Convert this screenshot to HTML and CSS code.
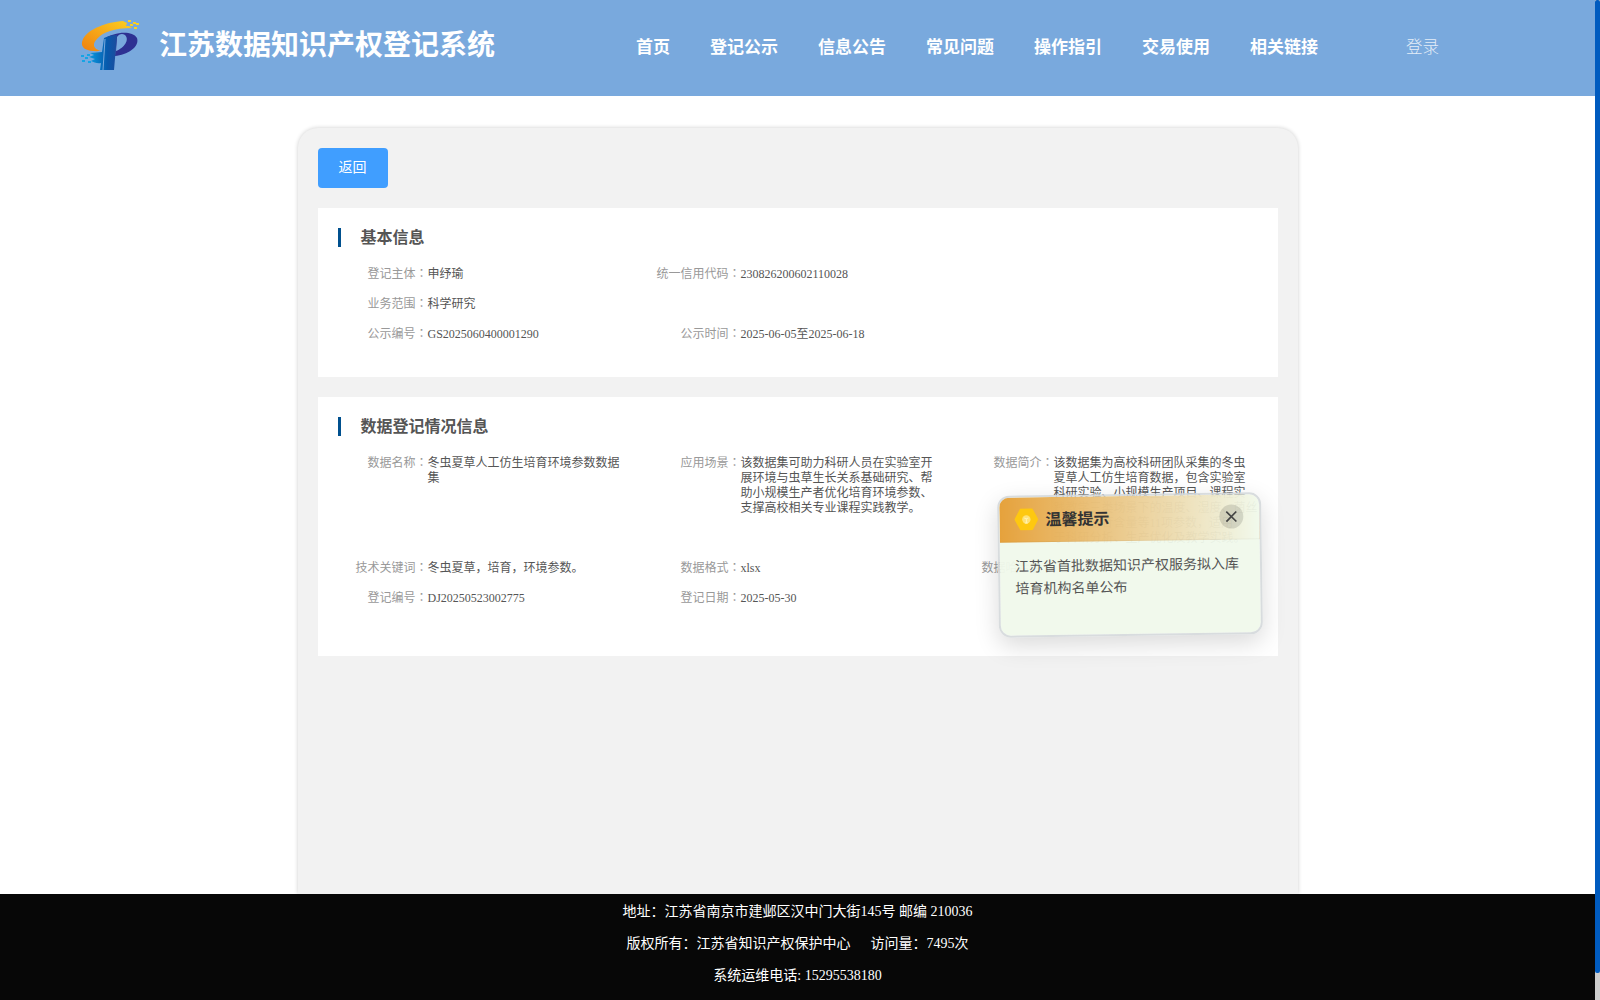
FILE: index.html
```html
<!DOCTYPE html>
<html lang="zh-CN">
<head>
<meta charset="utf-8">
<title>江苏数据知识产权登记系统</title>
<link rel="stylesheet" href="styles.css">
</head>
<body>
<div class="page">
  <header class="header">
    <svg class="logo" viewBox="0 0 60 52" width="60" height="52">
      <defs>
        <linearGradient id="gold" x1="0" y1="1" x2="1" y2="0"><stop offset="0" stop-color="#f08010"/><stop offset="1" stop-color="#fcd020"/></linearGradient>
        <linearGradient id="blue" x1="0" y1="0" x2="1" y2="0"><stop offset="0" stop-color="#0a9be0"/><stop offset=".65" stop-color="#0759ac"/><stop offset="1" stop-color="#1d4c9d"/></linearGradient>
      </defs>
      <path fill="url(#gold)" d="M43 1 C27 2 8 9 3 19 C-1 28 6 32 21 31 C13 29 12 24 17 19 C23 12 34 8 52 8 L49 6 L46 6 L47 3 Z"/>
      <path fill="#2e3192" fill-rule="evenodd" d="M24 19 C34 12 52 10 57 18 C60 27 47 35 35 36 L36 17 Z M37 17 L36 31 C44 28 50 20 45 15 C42 13 39 14 37 17Z"/>
      <path fill="url(#blue)" d="M24 18 C28 16 33 15 37 15 L34 50 L20 50 L21 43 C17 44 14 42 11 41 L15 39 L9 37 L14 35 L10 33 L22 32 Z"/>
      <path stroke="#79a9dd" stroke-width="1" fill="none" d="M25 19 L23 50"/>
      <path fill="#fcd020" d="M48 0h3v2h-3z M53 2h3v2h-3z M50 4h3v2h-3z M56 3h3v2h-3z M54 7h3v2h-3z"/>
      <path fill="#16a4e4" d="M1 35h3v2h-3z M5 37h3v2h-3z M2 40h3v2h-3z M8 41h3v2h-3z M7 34h3v2h-3z"/>
    </svg>
    <h1 class="title">江苏数据知识产权登记系统</h1>
    <nav class="nav"><a>首页</a><a>登记公示</a><a>信息公告</a><a>常见问题</a><a>操作指引</a><a>交易使用</a><a>相关链接</a></nav>
    <a class="login">登录</a>
  </header>
  <main class="main">
    <button class="back">返回</button>
    <section class="card">
      <h2 class="heading">基本信息</h2>
      <dl class="grid">
        <div class="item"><dt>登记主体<i lang="zh-TW">：</i></dt><dd>申纾瑜</dd></div>
        <div class="item wide"><dt>统一信用代码<i lang="zh-TW">：</i></dt><dd>230826200602110028</dd></div>
        <div class="item full"><dt>业务范围<i lang="zh-TW">：</i></dt><dd>科学研究</dd></div>
        <div class="item"><dt>公示编号<i lang="zh-TW">：</i></dt><dd>GS2025060400001290</dd></div>
        <div class="item wide"><dt>公示时间<i lang="zh-TW">：</i></dt><dd>2025-06-05至2025-06-18</dd></div>
      </dl>
    </section>
    <section class="card card-data">
      <h2 class="heading">数据登记情况信息</h2>
      <dl class="grid">
        <div class="item"><dt>数据名称<i lang="zh-TW">：</i></dt><dd>冬虫夏草人工仿生培育环境参数数据集</dd></div>
        <div class="item"><dt>应用场景<i lang="zh-TW">：</i></dt><dd>该数据集可助力科研人员在实验室开展环境与虫草生长关系基础研究、帮助小规模生产者优化培育环境参数、支撑高校相关专业课程实践教学。</dd></div>
        <div class="item"><dt>数据简介<i lang="zh-TW">：</i></dt><dd class="lines">该数据集为高校科研团队采集的冬虫<br>夏草人工仿生培育数据，包含实验室<br>科研实验、小规模生产项目、课程实<br>践教学三类场景下的温度、湿度、菌丝<br>长度、腺苷含量等11项参数，适用<br>于科研分析、生产优化及教学实践。</dd></div>
        <div class="item"><dt>技术关键词<i lang="zh-TW">：</i></dt><dd>冬虫夏草，培育，环境参数。</dd></div>
        <div class="item"><dt>数据格式<i lang="zh-TW">：</i></dt><dd>xlsx</dd></div>
        <div class="item"><dt>数据哈希值<i lang="zh-TW">：</i></dt><dd></dd></div>
        <div class="item"><dt>登记编号<i lang="zh-TW">：</i></dt><dd>DJ20250523002775</dd></div>
        <div class="item"><dt>登记日期<i lang="zh-TW">：</i></dt><dd>2025-05-30</dd></div>
      </dl>
    </section>
  </main>
  <footer class="footer">
    <p>地址：江苏省南京市建邺区汉中门大街145号 邮编 210036</p>
    <p>版权所有：江苏省知识产权保护中心<span class="visits">访问量：7495次</span></p>
    <p>系统运维电话: 15295538180</p>
  </footer>
</div>
<div class="scrollbar"><div class="thumb"></div></div>
<aside class="notice">
  <div class="notice-head">
    <svg width="24" height="22" viewBox="0 0 24 22"><path fill="#fec810" d="M6 0h12l6 11-6 11H6L0 11z"/><circle cx="12" cy="11" r="4.2" fill="#ffe277"/><path fill="none" stroke="#fff3b8" stroke-width="1" d="M10.5 14.5h3M12 10.5v3.5M10 9.5l2 1 2-1"/></svg>
    <h3>温馨提示</h3>
    <button class="close"><svg width="12" height="12" viewBox="0 0 12 12"><path d="M1 1l10 10M11 1L1 11" stroke="#444" stroke-width="1.7"/></svg></button>
  </div>
  <p class="notice-body">江苏省首批数据知识产权服务拟入库培育机构名单公布</p>
</aside>
</body>
</html>
```
FILE: styles.css
```css
* { box-sizing: border-box; }
body { margin: 0; height: 1000px; overflow: hidden; display: flex; background: #fff; font-family: "Liberation Serif", "Noto Sans CJK SC", serif; }
h1, h2, h3, p, dl, dd { margin: 0; }
.page { width: 1595px; height: 1000px; display: flex; flex-direction: column; }
.header { height: 96px; flex: none; background: #79a9dd; color: #fff; display: flex; align-items: center; padding: 0 0 4px 80px; }
.logo { flex: none; margin-right: 19px; }
.title { width: 477px; font-size: 28px; line-height: 40px; font-weight: 700; white-space: nowrap; }
.nav { display: flex; gap: 40px; font-size: 17px; font-weight: 700; line-height: 24px; margin-top: 4px; white-space: nowrap; }
.login { margin: 4px 0 0 88px; font-size: 16.5px; font-weight: 300; opacity: .8; line-height: 24px; }
.main { width: 1000px; margin: 32px auto 0; height: 766px; background: #f2f2f2; border-radius: 20px 20px 0 0; box-shadow: 0 0 4px rgba(0,0,0,.2); padding: 20px; }
.back { display: block; width: 70px; height: 40px; border: 0; border-radius: 4px; background: #409eff; color: #fff; font: 14px/20px "Liberation Serif", "Noto Sans CJK SC", serif; padding: 0; }
.card { height: 169px; margin-top: 20px; background: #fff; padding: 20px 0 0 20px; }
.card-data { height: 259px; }
.heading { height: 19px; border-left: 3px solid #00508e; padding-left: 20px; font-size: 16px; line-height: 19px; color: #555; font-weight: 700; }
.grid { display: grid; grid-template-columns: repeat(3, 313px); row-gap: 15px; margin-top: 20px; font-size: 12px; line-height: 15px; }
.item { display: flex; min-height: 15px; }
.wide { grid-column: span 2; }
.full { grid-column: span 3; }
dt { width: 90px; flex: none; text-align: right; color: #999; white-space: nowrap; }
dt i { font-style: normal; font-family: "Noto Sans CJK TC", sans-serif; line-height: 1; }
dd { width: 194px; color: #555; }
.lines { white-space: nowrap; }
.footer { flex: 1; background: #070707; color: #fff; text-align: center; font-size: 14px; line-height: 32px; padding-top: 2px; }
.visits { margin-left: 20px; }
.scrollbar { width: 5px; height: 1000px; background: #ccc; }
.thumb { height: 973px; background: #005bbf; border-radius: 2px; }
.notice { position: absolute; left: 998px; top: 494px; width: 264px; height: 142px; border: 2px solid rgba(212,216,218,.9); border-radius: 12px; background: rgba(240,249,235,.95); background-clip: padding-box; box-shadow: 0 8px 24px rgba(0,0,0,.15); transform: rotate(-.8deg); overflow: hidden; }
.notice-head { height: 45px; display: flex; align-items: center; gap: 7px; padding: 0 16px 0 15px; background: linear-gradient(90deg, #e6a23c, rgba(230,162,60,0)); border-bottom: 1px solid rgba(0,0,0,.04); }
.notice-head h3 { flex: 1; font-size: 16px; line-height: 24px; font-weight: 700; color: #333; padding-top: 2px; }
.close { width: 24px; height: 24px; border: 0; border-radius: 50%; background: rgba(0,0,0,.12); padding: 0; display: flex; align-items: center; justify-content: center; }
.notice-body { padding: 14px 15px; font-size: 14px; line-height: 22px; color: #555; }
```
